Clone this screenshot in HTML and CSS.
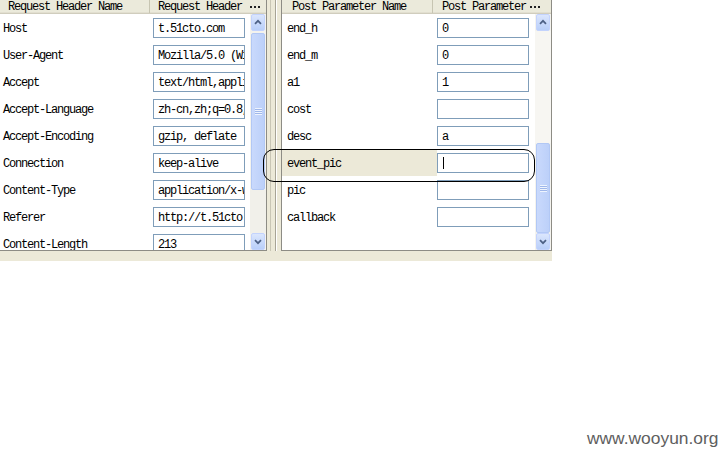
FILE: index.html
```html
<!DOCTYPE html>
<html>
<head>
<meta charset="utf-8">
<link rel="stylesheet" href="styles.css">
</head>
<body>
<div class="app">
  <div class="panel left">
    <div class="head">
      <div class="hc c1">Request Header Name</div>
      <div class="hc c2">Request Header</div>
      <div class="picker"><i></i><i></i><i></i></div>
    </div>
    <div class="body">
      <div class="rows">
        <div class="row"><span class="name">Host</span><span class="val">t.51cto.com</span></div>
        <div class="row"><span class="name">User-Agent</span><span class="val">Mozilla/5.0 (Windows NT 5.1)</span></div>
        <div class="row"><span class="name">Accept</span><span class="val">text/html,application/xhtml+xml</span></div>
        <div class="row"><span class="name">Accept-Language</span><span class="val">zh-cn,zh;q=0.8,en-us</span></div>
        <div class="row"><span class="name">Accept-Encoding</span><span class="val">gzip, deflate</span></div>
        <div class="row"><span class="name">Connection</span><span class="val">keep-alive</span></div>
        <div class="row"><span class="name">Content-Type</span><span class="val">application/x-www-form-urlencoded</span></div>
        <div class="row"><span class="name">Referer</span><span class="val">http://t.51cto.com/</span></div>
        <div class="row"><span class="name">Content-Length</span><span class="val">213</span></div>
      </div>
      <div class="sb">
        <div class="btn"><svg width="14" height="15" viewBox="0 0 14 15"><path d="M3.5 9 L7 5.5 L10.5 9" fill="none" stroke="#4d6185" stroke-width="2"/></svg></div>
        <div class="track lt1"></div>
        <div class="thumb lth"><span class="grip"></span></div>
        <div class="track lt2"></div>
        <div class="btn"><svg width="14" height="15" viewBox="0 0 14 15"><path d="M3.5 6 L7 9.5 L10.5 6" fill="none" stroke="#4d6185" stroke-width="2"/></svg></div>
      </div>
    </div>
  </div>
  <div class="splitter"></div>
  <div class="panel right">
    <div class="head">
      <div class="hc c1">Post Parameter Name</div>
      <div class="hc c2">Post Parameter</div>
      <div class="picker"><i></i><i></i><i></i></div>
    </div>
    <div class="body">
      <div class="rows">
        <div class="row"><span class="name">end_h</span><span class="val">0</span></div>
        <div class="row"><span class="name">end_m</span><span class="val">0</span></div>
        <div class="row"><span class="name">a1</span><span class="val">1</span></div>
        <div class="row"><span class="name">cost</span><span class="val"></span></div>
        <div class="row"><span class="name">desc</span><span class="val">a</span></div>
        <div class="row sel"><span class="name">event_pic</span><span class="val"><span class="caret"></span></span></div>
        <div class="row"><span class="name">pic</span><span class="val"></span></div>
        <div class="row"><span class="name">callback</span><span class="val"></span></div>
      </div>
      <div class="sb">
        <div class="btn"><svg width="14" height="15" viewBox="0 0 14 15"><path d="M3.5 9 L7 5.5 L10.5 9" fill="none" stroke="#4d6185" stroke-width="2"/></svg></div>
        <div class="track rt1"></div>
        <div class="thumb rth"><span class="grip"></span></div>
        <div class="btn"><svg width="14" height="15" viewBox="0 0 14 15"><path d="M3.5 6 L7 9.5 L10.5 6" fill="none" stroke="#4d6185" stroke-width="2"/></svg></div>
      </div>
    </div>
  </div>
</div>
<div class="note"></div>
<div class="wm">www.wooyun.org</div>
</body>
</html>
```

FILE: styles.css
```css
* { box-sizing: border-box; }
html, body { margin: 0; padding: 0; }
body {
  width: 720px;
  height: 450px;
  overflow: hidden;
  position: relative;
  background: #fff;
  font-family: "Liberation Mono", "DejaVu Sans Mono", monospace;
  font-size: 12px;
  letter-spacing: -1.2px;
  color: #000;
}
.app {
  display: flex;
  align-items: flex-start;
  width: 552px;
  height: 261px;
  background: #ece9d8;
}
.panel {
  display: flex;
  flex-direction: column;
  height: 251px;
  background: #fff;
  border-right: 1px solid #8d8c85;
  border-bottom: 1px solid #8d8c85;
}
.left { width: 267px; }
.right { width: 271px; border-left: 1px solid #8d8c85; }
.splitter {
  width: 14px;
  height: 251px;
  background:
    linear-gradient(to right,
      transparent 0, transparent 3px,
      #c9c6b5 3px, #c9c6b5 4px,
      transparent 4px, transparent 8px,
      #a7a496 8px, #a7a496 9px,
      #fff 9px, #fff 10px,
      transparent 10px);
}
.head {
  display: flex;
  height: 14px;
  background: #ebeadb;
  border-bottom: 1px solid #d0cdbd;
  box-shadow: inset 0 -1px 0 #e2dfd0;
  line-height: 15px;
  white-space: nowrap;
  overflow: hidden;
}
.hc { overflow: hidden; }
.left .c1 { width: 150px; padding-left: 8px; border-right: 1px solid #c7c5b2; }
.right .c1 { width: 151px; padding-left: 10px; border-right: 1px solid #c7c5b2; }
.left .c2 { flex: 1; padding-left: 8px; }
.right .c2 { flex: 1; padding-left: 9px; }
.picker {
  display: flex;
  align-items: center;
  gap: 2px;
  padding-left: 1px;
}
.left .picker { width: 17px; }
.right .picker { width: 23px; padding-left: 2px; }
.picker i {
  display: block;
  width: 2px;
  height: 2px;
  background: #222;
}
.body {
  display: flex;
  height: 236px;
  overflow: hidden;
}
.rows { overflow: hidden; }
.left .rows { width: 250px; }
.right .rows { width: 253px; }
.row {
  display: flex;
  align-items: flex-start;
  height: 27px;
  flex-shrink: 0;
  white-space: nowrap;
}
.name {
  height: 27px;
  padding-top: 4px;
  line-height: 23px;
  overflow: hidden;
}
.left .name { width: 153px; padding-left: 3px; }
.right .name { width: 155px; padding-left: 5px; }
.sel .name { background: #ece9d8; }
.val {
  display: block;
  position: relative;
  width: 92px;
  height: 20px;
  margin-top: 4px;
  padding-left: 4px;
  padding-top: 2px;
  border: 1px solid #7f9db9;
  background: #fff;
  line-height: 17px;
  overflow: hidden;
}
.caret {
  position: absolute;
  left: 5px;
  top: 3px;
  width: 1px;
  height: 12px;
  background: #000;
}
.sb {
  display: flex;
  flex-direction: column;
  width: 16px;
  background: #f4f3ee;
}
.btn {
  height: 17px;
  margin: 0 1px;
  border: 1px solid #c3d3fd;
  border-radius: 2px;
  background: linear-gradient(#dbe6fd, #b9cff9);
  display: flex;
  align-items: center;
  justify-content: center;
  flex-shrink: 0;
}
.btn svg { display: block; }
.track { flex-shrink: 0; }
.lt1 { height: 2px; }
.lt2 { height: 43px; background: #f1f0ea; }
.rt1 { height: 112px; background: #f7f6f2; }
.thumb {
  flex-shrink: 0;
  margin: 0 1px;
  border: 1px solid #b2c8f5;
  border-radius: 2px;
  background: linear-gradient(to right, #c9d9fc, #bcd0f9);
  display: flex;
  align-items: center;
  justify-content: center;
}
.lth { height: 157px; }
.rth { height: 90px; }
.grip {
  display: block;
  width: 7px;
  height: 7px;
  background: repeating-linear-gradient(#eef4fe 0, #eef4fe 1px, #9fb7ea 1px, #9fb7ea 2px);
}
.note {
  position: absolute;
  left: 263px;
  top: 149px;
  width: 272px;
  height: 33px;
  border: 1px solid #000;
  border-radius: 11px;
}
.wm {
  position: absolute;
  left: 587px;
  top: 428px;
  font-family: "Liberation Sans", Arial, sans-serif;
  font-size: 17.4px;
  letter-spacing: 0;
  color: #5e5e5e;
}
```
